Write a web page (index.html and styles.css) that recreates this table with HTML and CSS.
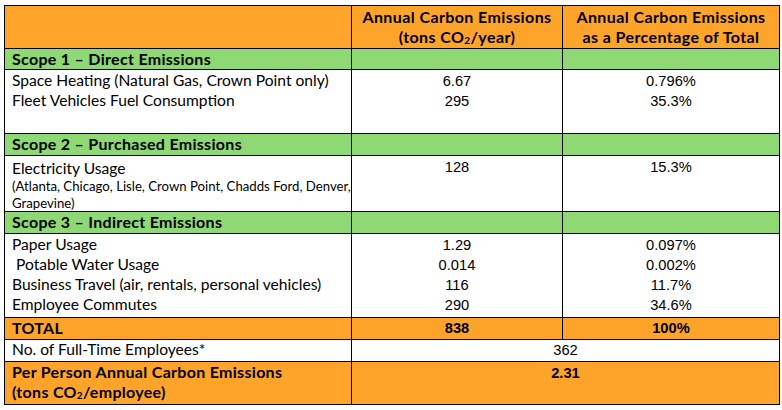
FILE: index.html
```html
<!DOCTYPE html>
<html>
<head>
<meta charset="utf-8">
<link rel="stylesheet" href="styles.css">
</head>
<body>
<table class="em">
  <colgroup><col class="c1"><col class="c2"><col class="c3"></colgroup>
  <tr class="head">
    <th></th>
    <th>Annual Carbon Emissions<br>(tons CO<sub>2</sub>/year)</th>
    <th>Annual Carbon Emissions<br>as a Percentage of Total</th>
  </tr>
  <tr class="scope s1"><td>Scope 1 – Direct Emissions</td><td></td><td></td></tr>
  <tr class="body r1">
    <td class="lbl">Space Heating (Natural Gas, Crown Point only)<br>Fleet Vehicles Fuel Consumption</td>
    <td class="num">6.67<br>295</td>
    <td class="num">0.796%<br>35.3%</td>
  </tr>
  <tr class="scope"><td>Scope 2 – Purchased Emissions</td><td></td><td></td></tr>
  <tr class="body r2">
    <td class="lbl">Electricity Usage<div class="small">(Atlanta, Chicago, Lisle, Crown Point, Chadds Ford, Denver, Grapevine)</div></td>
    <td class="num">128</td>
    <td class="num">15.3%</td>
  </tr>
  <tr class="scope"><td>Scope 3 – Indirect Emissions</td><td></td><td></td></tr>
  <tr class="body r3">
    <td class="lbl">Paper Usage<br><span class="ind">Potable Water Usage</span><br>Business Travel (air, rentals, personal vehicles)<br>Employee Commutes</td>
    <td class="num">1.29<br>0.014<br>116<br>290</td>
    <td class="num">0.097%<br>0.002%<br>11.7%<br>34.6%</td>
  </tr>
  <tr class="total"><td class="lbl">TOTAL</td><td class="num">838</td><td class="num">100%</td></tr>
  <tr class="emp"><td class="lbl">No. of Full-Time Employees*</td><td class="num" colspan="2">362</td></tr>
  <tr class="per"><td class="lbl">Per Person Annual Carbon Emissions<br>(tons CO<sub>2</sub>/employee)</td><td class="num" colspan="2">2.31</td></tr>
</table>
</body>
</html>
```
FILE: styles.css
```css
body {
  margin: 5px 0 0 4px;
  background: #fff;
}
.em {
  border-collapse: collapse;
  table-layout: fixed;
  width: 775px;
  font-family: "Lato", "Liberation Sans", sans-serif;
  font-size: 15.6px;
  color: #000;
}
.c1 { width: 347px; }
.c2 { width: 211px; }
.c3 { width: 217px; }
.em th, .em td {
  border: 1px solid #000;
  padding: 0 0 0 7px;
  vertical-align: top;
  line-height: 20px;
}
.head { height: 43px; background: #ffa42b; }
.head th {
  font-weight: 700;
  text-align: center;
  padding: 1px 0 0;
  font-size: 16px;
  letter-spacing: 0.4px;
}
sub {
  font-size: 10px;
  vertical-align: -1px;
  line-height: 0;
}
.scope { height: 22px; background: #8ed973; }
.scope.s1 { height: 21px; }
.scope td { font-weight: 700; line-height: 19px; font-size: 16px; letter-spacing: 0.3px; }
.body td { background: #fff; }
.r1 { height: 64px; }
.r2 { height: 56px; }
.r3 { height: 84px; }
.lbl { padding-top: 1px; padding-right: 0; }
.r2 .lbl { padding-top: 2px; }
.num {
  font-family: "Liberation Sans", Arial, sans-serif;
  text-align: center;
  padding: 1px 0 0 !important;
  font-size: 14.7px;
  letter-spacing: 0;
}
.small { font-size: 13.2px; line-height: 16.5px; margin-right: -4px; }
.ind { padding-left: 4px; }
.total { height: 22px; background: #ffa42b; }
.total td { font-weight: 700; line-height: 19px; }
.total .lbl { font-size: 16px; letter-spacing: 0.3px; }
.emp { height: 22px; }
.emp td { line-height: 19px; }
.per { height: 43px; background: #ffa42b; }
.per td { font-weight: 700; }
.per .lbl { font-size: 16px; letter-spacing: 0.3px; }
```
